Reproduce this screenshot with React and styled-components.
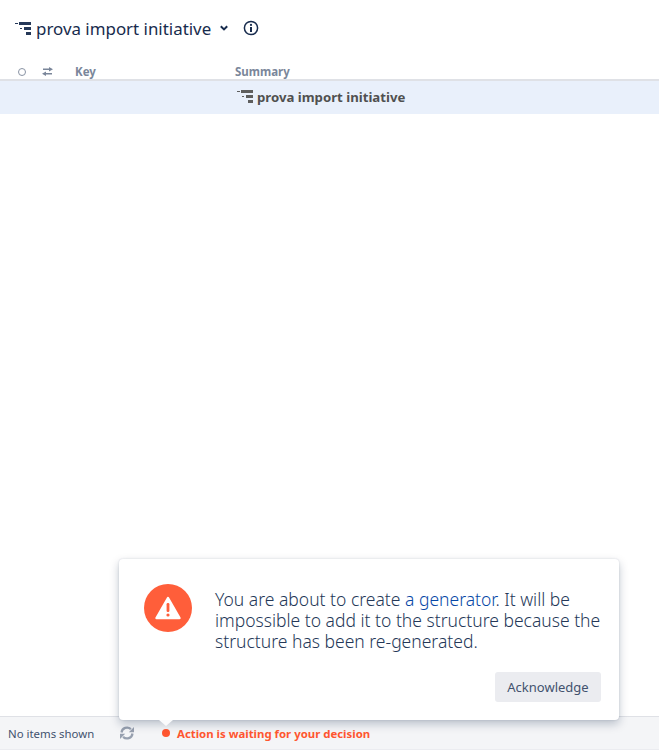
import React from "react";
import styled, { createGlobalStyle } from "styled-components";

const GlobalStyle = createGlobalStyle`
  html, body {
    margin: 0;
    padding: 0;
    background: #fff;
    font-family: "Noto Sans", "Open Sans", sans-serif;
  }
`;

const Page = styled.div`
  position: relative;
  display: flex;
  flex-direction: column;
  width: 659px;
  height: 750px;
  overflow: hidden;
`;

const TitleBar = styled.div`
  display: flex;
  align-items: center;
  height: 58px;
  padding: 0 0 2px 15px;
  box-sizing: border-box;
  color: #172b4d;
`;

const Title = styled.span`
  font-size: 16.9px;
  margin-left: 5px;
  white-space: nowrap;
`;

const Chevron = styled.svg`
  width: 8px;
  height: 6px;
  margin-left: 9px;
`;

const InfoIcon = styled.svg`
  width: 16px;
  height: 16px;
  margin-left: 15px;
`;

const HeaderRow = styled.div`
  display: flex;
  align-items: center;
  height: 23px;
  padding-top: 6px;
  box-sizing: border-box;
  border-bottom: 2px solid #dfe1e6;
  color: #7a869a;
  font-size: 11.5px;
  font-weight: 700;
`;

const Cell = styled.div`
  width: ${({ $w }) => $w}px;
  padding-left: ${({ $pl }) => $pl || 0}px;
  box-sizing: border-box;
  display: flex;
  align-items: center;
  flex-shrink: 0;
`;

const Ring = styled.span`
  display: block;
  width: 8px;
  height: 8px;
  box-sizing: border-box;
  border: 1.5px solid #8993a4;
  border-radius: 50%;
`;

const SelectedRow = styled.div`
  display: flex;
  align-items: center;
  height: 33px;
  padding-bottom: 2px;
  box-sizing: border-box;
  background: #e9f0fb;
  color: #505050;
  font-size: 13.2px;
  font-weight: 700;
`;

const RowName = styled.span`
  margin-left: 4px;
  white-space: nowrap;
`;

const Spacer = styled.div`
  flex: 1;
`;

const StatusBar = styled.div`
  display: flex;
  align-items: center;
  height: 34px;
  box-sizing: border-box;
  background: #f4f5f7;
  border-top: 1px solid #dfe1e6;
  border-bottom: 1px solid #ebecf0;
  font-size: 11.4px;
  color: #42526e;
  padding-left: 8px;
`;

const ItemsLabel = styled.span`
  width: 111px;
  white-space: nowrap;
`;

const SyncIcon = styled.svg`
  width: 16px;
  height: 16px;
`;

const Dot = styled.span`
  width: 8px;
  height: 8px;
  border-radius: 50%;
  background: #ff5630;
  margin-left: 27px;
`;

const ActionText = styled.span`
  margin-left: 7px;
  font-weight: 700;
  color: #ff5630;
  white-space: nowrap;
`;

const Popup = styled.div`
  position: absolute;
  left: 119px;
  top: 559px;
  width: 500px;
  height: 161px;
  box-sizing: border-box;
  background: #fff;
  border-radius: 4px;
  box-shadow: 0 4px 10px rgba(9, 30, 66, 0.25), 0 0 2px rgba(9, 30, 66, 0.16);
  padding: 25px 18px 18px 25px;
  display: flex;
  flex-direction: column;

  &::after {
    content: "";
    position: absolute;
    left: 40px;
    bottom: -6px;
    border-left: 7px solid transparent;
    border-right: 7px solid transparent;
    border-top: 6px solid #fafbfc;
  }
`;

const PopupBody = styled.div`
  display: flex;
  flex: 1;
`;

const WarnBadge = styled.div`
  width: 48px;
  height: 48px;
  border-radius: 50%;
  background: #ff5e3a;
  flex-shrink: 0;
  display: flex;
  align-items: center;
  justify-content: center;
`;

const WarnIcon = styled.svg`
  width: 28px;
  height: 26px;
`;

const Message = styled.p`
  margin: 5px 0 0 23px;
  font-size: 17.5px;
  font-weight: 300;
  line-height: 21px;
  color: #253858;
  width: 400px;
`;

const GeneratorLink = styled.a`
  color: #0747a6;
`;

const PopupFooter = styled.div`
  display: flex;
  justify-content: flex-end;
`;

const Button = styled.button`
  height: 30px;
  width: 106px;
  padding: 0;
  border: 0;
  border-radius: 3px;
  background: #ebecf0;
  color: #42526e;
  font-family: inherit;
  font-size: 13px;
`;

const StructureIcon = ({ color }) => (
  <svg width="16" height="13" viewBox="0 0 16 13">
    <rect x="0" y="1" width="3" height="1" fill={color} />
    <rect x="4" y="0" width="12" height="3" fill={color} />
    <rect x="5" y="6" width="2" height="1" fill={color} />
    <rect x="9" y="5" width="7" height="3" fill={color} />
    <rect x="11" y="10" width="5" height="3" fill={color} />
  </svg>
);

const App = () => (
  <Page>
    <GlobalStyle />
    <TitleBar>
      <StructureIcon color="#253858" />
      <Title>prova import initiative</Title>
      <Chevron viewBox="0 0 8 6">
        <path d="M.8 1.2 4 4.4l3.2-3.2" fill="none" stroke="#172b4d" strokeWidth="2" />
      </Chevron>
      <InfoIcon viewBox="0 0 16 16">
        <circle cx="8" cy="8" r="6.6" fill="none" stroke="#172b4d" strokeWidth="1.5" />
        <rect x="7" y="7" width="2" height="5" fill="#172b4d" />
        <circle cx="8" cy="4.9" r="1.1" fill="#172b4d" />
      </InfoIcon>
    </TitleBar>
    <HeaderRow>
      <Cell $w={42} $pl={18}><Ring /></Cell>
      <Cell $w={33}>
        <svg width="11" height="9" viewBox="0 0 11 9">
          <path d="M1 1.5h6V0l4 2.25L7 4.5V3H1zM10 6H4V4.5L0 6.75 4 9V7.5h6z" fill="#7a869a" />
        </svg>
      </Cell>
      <Cell $w={160}>Key</Cell>
      <Cell $w={200}>Summary</Cell>
    </HeaderRow>
    <SelectedRow>
      <Cell $w={237} />
      <StructureIcon color="#5e5e5e" />
      <RowName>prova import initiative</RowName>
    </SelectedRow>
    <Spacer />
    <StatusBar>
      <ItemsLabel>No items shown</ItemsLabel>
      <SyncIcon viewBox="0 0 16 16">
        <path
          d="M2.5 7.5a5.6 5.6 0 0 1 9.4-3.4M13.5 8.5a5.6 5.6 0 0 1-9.4 3.4"
          fill="none"
          stroke="#97a0af"
          strokeWidth="2.2"
        />
        <path d="M15 2v5.2H9.8zM1 14v-5.2h5.2z" fill="#97a0af" />
      </SyncIcon>
      <Dot />
      <ActionText>Action is waiting for your decision</ActionText>
    </StatusBar>
    <Popup>
      <PopupBody>
        <WarnBadge>
          <WarnIcon viewBox="0 0 28 26">
            <path
              d="M14 3 25.5 23H2.5z"
              fill="#fff"
              stroke="#fff"
              strokeWidth="2.4"
              strokeLinejoin="round"
            />
            <rect x="12.6" y="8" width="2.8" height="9" rx="1.2" fill="#ff5e3a" />
            <circle cx="14" cy="20" r="1.6" fill="#ff5e3a" />
          </WarnIcon>
        </WarnBadge>
        <Message>
          You are about to create <GeneratorLink>a generator</GeneratorLink>. It will be impossible
          to add it to the structure because the structure has been re-generated.
        </Message>
      </PopupBody>
      <PopupFooter>
        <Button>Acknowledge</Button>
      </PopupFooter>
    </Popup>
  </Page>
);

export default App;
